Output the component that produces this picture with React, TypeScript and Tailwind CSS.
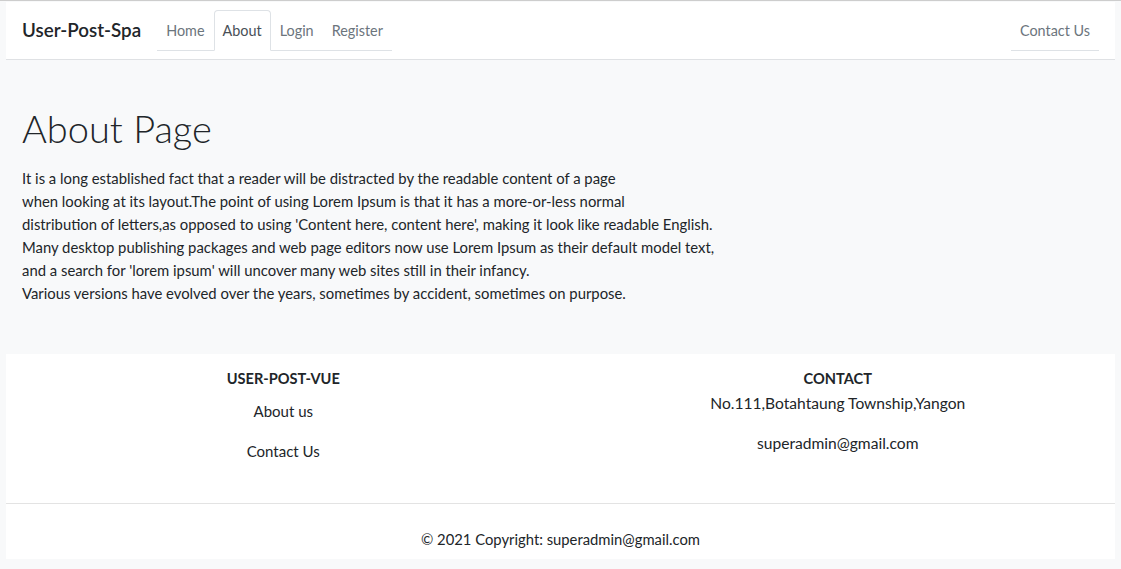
export default function App() {
  const lines = [
    'It is a long established fact that a reader will be distracted by the readable content of a page',
    'when looking at its layout.The point of using Lorem Ipsum is that it has a more-or-less normal',
    "distribution of letters,as opposed to using 'Content here, content here', making it look like readable English.",
    'Many desktop publishing packages and web page editors now use Lorem Ipsum as their default model text,',
    "and a search for 'lorem ipsum' will uncover many web sites still in their infancy.",
    'Various versions have evolved over the years, sometimes by accident, sometimes on purpose.',
  ];

  return (
    <div className="min-h-[569px] bg-[#f8f9fa] border-t border-[#cdcdcd] pt-px px-[6px] font-['Lato',sans-serif] text-[#212529]">
      {/* navbar */}
      <nav className="h-[58px] bg-white border-b border-[#dfe1e4] flex items-center justify-between px-4">
        <div className="flex items-center">
          <a className="text-[18.8px] font-semibold text-[#212529] mr-[16px]">User-Post-Spa</a>
          <ul className="flex border-b border-[#dee2e6] text-[14.4px] leading-[23px]">
            <li className="px-2 py-2 border border-transparent -mb-px text-[#6c757d]">Home</li>
            <li className="px-2 py-2 border border-[#dee2e6] border-b-white rounded-t -mb-px bg-white text-[#495057]">About</li>
            <li className="px-2 py-2 border border-transparent -mb-px text-[#6c757d]">Login</li>
            <li className="px-2 py-2 border border-transparent -mb-px text-[#6c757d]">Register</li>
          </ul>
        </div>
        <ul className="flex border-b border-[#dee2e6] text-[14.4px] leading-[23px]">
          <li className="px-2 py-2 border border-transparent -mb-px text-[#6c757d]">Contact Us</li>
        </ul>
      </nav>

      {/* content */}
      <main className="px-4 pt-[46px] pb-[49px]">
        <h1 className="text-[38px] font-light leading-[45px] mb-[16px]">About Page</h1>
        <p className="text-[14.85px] leading-[23px]">
          {lines.map((l, i) => (
            <span key={i}>
              {l}
              <br />
            </span>
          ))}
        </p>
      </main>

      {/* footer */}
      <footer className="bg-white">
        <div className="grid grid-cols-2 pt-[16px] h-[149px]">
          <div className="flex flex-col items-center">
            <h6 className="text-[14.6px] font-bold leading-[17px] uppercase">User-Post-Vue</h6>
            <a className="mt-[12px] text-[15px] leading-[24px]">About us</a>
            <a className="mt-[16px] text-[15px] leading-[24px]">Contact Us</a>
          </div>
          <div className="flex flex-col items-center">
            <h6 className="text-[14.6px] font-bold leading-[17px] uppercase">Contact</h6>
            <p className="mt-[4px] text-[15.6px] leading-[24px]">No.111,Botahtaung Township,Yangon</p>
            <p className="mt-[16px] text-[15.6px] leading-[24px]">superadmin@gmail.com</p>
          </div>
        </div>
        <hr className="border-t border-[#e3e3e3]" />
        <div className="text-center text-[14.8px] leading-[23px] pt-[24px] pb-[8px]">
          © 2021 Copyright: superadmin@gmail.com
        </div>
      </footer>
    </div>
  );
}
